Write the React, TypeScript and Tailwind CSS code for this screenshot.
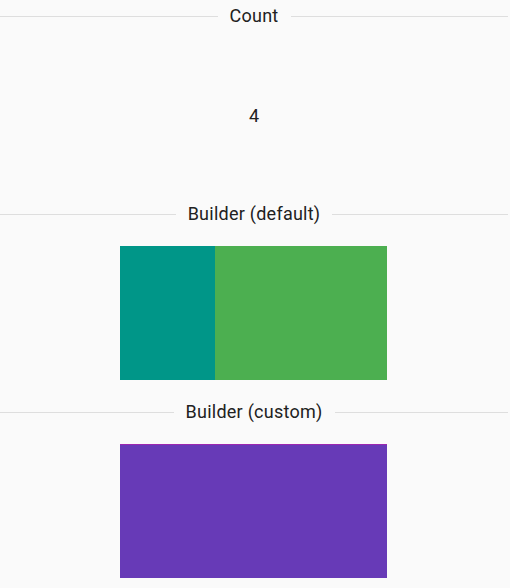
import React from 'react';

const Header = ({ title }: { title: string }) => (
  <div className="flex items-center h-8">
    <div className="flex-1 h-px bg-[#dedede]" />
    <span className="px-3 text-[18px] leading-none tracking-[0.25px] text-[#212121]">{title}</span>
    <div className="flex-1 h-px bg-[#dedede]" />
  </div>
);

export default function App() {
  return (
    <div
      className="w-[510px] h-[588px] bg-[#fafafa] overflow-hidden pr-[2px]"
      style={{ fontFamily: 'Roboto, "Noto Sans", sans-serif' }}
    >
      {/* count */}
      <Header title="Count" />
      <div className="py-4">
        <div className="h-[134px] flex items-center justify-center text-[18px] text-[#212121]">4</div>
      </div>

      {/* default builder */}
      <Header title="Builder (default)" />
      <div className="py-4">
        <div className="ml-[120px] w-[267px] h-[134px] flex">
          <div className="w-[95px] bg-[#009688]" />
          <div className="flex-1 bg-[#4caf50]" />
        </div>
      </div>

      {/* custom builder */}
      <Header title="Builder (custom)" />
      <div className="py-4">
        <div className="ml-[120px] w-[267px] h-[134px] bg-[#673ab7] border-t border-[#9c27b0]" />
      </div>
    </div>
  );
}
